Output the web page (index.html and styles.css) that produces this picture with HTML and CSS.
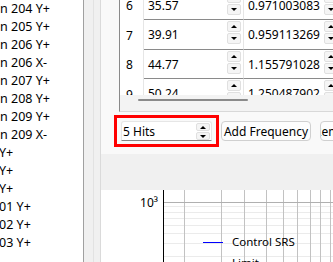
FILE: index.html
```html
<!DOCTYPE html>
<html lang="en">
<head>
  <meta charset="UTF-8" />
  <meta name="viewport" content="width=device-width, initial-scale=1.0" />
  <title>SRS Setup</title>
  <link rel="stylesheet" href="styles.css">
</head>
<body>
  <div class="app">
    <ul class="tree">
      <li>n 204 Y+</li>
      <li>n 205 Y+</li>
      <li>n 206 Y+</li>
      <li>n 206 X-</li>
      <li>n 207 Y+</li>
      <li>n 208 Y+</li>
      <li>n 209 Y+</li>
      <li>n 209 X-</li>
      <li class="cut">Y+</li>
      <li class="cut">Y+</li>
      <li class="cut">Y+</li>
      <li class="cut">01 Y+</li>
      <li class="cut">02 Y+</li>
      <li class="cut">03 Y+</li>
    </ul>

    <div class="gutter">
      <div class="gutter-track"></div>
      <div class="gutter-edge"></div>
    </div>

    <div class="main">
      <div class="table-frame">
        <div class="grid">
          <div class="grid-rows">
            <div class="row">
              <div class="rh">6</div>
              <div class="cell c-freq">
                <span class="val">35.57</span>
                <div class="spin">
                  <span class="sbtn"><svg width="6" height="3"><path d="M0 3L3 0L6 3Z"/></svg></span>
                  <span class="sbtn"><svg width="6" height="3"><path d="M0 0L3 3L6 0Z"/></svg></span>
                </div>
              </div>
              <div class="cell c-amp">
                <span class="val">0.971003083</span>
                <div class="spin">
                  <span class="sbtn"><svg width="6" height="3"><path d="M0 3L3 0L6 3Z"/></svg></span>
                  <span class="sbtn"><svg width="6" height="3"><path d="M0 0L3 3L6 0Z"/></svg></span>
                </div>
              </div>
            </div>
            <div class="row">
              <div class="rh">7</div>
              <div class="cell c-freq">
                <span class="val">39.91</span>
                <div class="spin">
                  <span class="sbtn"><svg width="6" height="3"><path d="M0 3L3 0L6 3Z"/></svg></span>
                  <span class="sbtn"><svg width="6" height="3"><path d="M0 0L3 3L6 0Z"/></svg></span>
                </div>
              </div>
              <div class="cell c-amp">
                <span class="val">0.959113269</span>
                <div class="spin">
                  <span class="sbtn"><svg width="6" height="3"><path d="M0 3L3 0L6 3Z"/></svg></span>
                  <span class="sbtn"><svg width="6" height="3"><path d="M0 0L3 3L6 0Z"/></svg></span>
                </div>
              </div>
            </div>
            <div class="row">
              <div class="rh">8</div>
              <div class="cell c-freq">
                <span class="val">44.77</span>
                <div class="spin">
                  <span class="sbtn"><svg width="6" height="3"><path d="M0 3L3 0L6 3Z"/></svg></span>
                  <span class="sbtn"><svg width="6" height="3"><path d="M0 0L3 3L6 0Z"/></svg></span>
                </div>
              </div>
              <div class="cell c-amp">
                <span class="val">1.155791028</span>
                <div class="spin">
                  <span class="sbtn"><svg width="6" height="3"><path d="M0 3L3 0L6 3Z"/></svg></span>
                  <span class="sbtn"><svg width="6" height="3"><path d="M0 0L3 3L6 0Z"/></svg></span>
                </div>
              </div>
            </div>
            <div class="row">
              <div class="rh">9</div>
              <div class="cell c-freq">
                <span class="val">50.24</span>
                <div class="spin">
                  <span class="sbtn"><svg width="6" height="3"><path d="M0 3L3 0L6 3Z"/></svg></span>
                  <span class="sbtn"><svg width="6" height="3"><path d="M0 0L3 3L6 0Z"/></svg></span>
                </div>
              </div>
              <div class="cell c-amp">
                <span class="val">1.250487902</span>
                <div class="spin">
                  <span class="sbtn"><svg width="6" height="3"><path d="M0 3L3 0L6 3Z"/></svg></span>
                  <span class="sbtn"><svg width="6" height="3"><path d="M0 0L3 3L6 0Z"/></svg></span>
                </div>
              </div>
            </div>
          </div>
        </div>
        <div class="hscroll"><div class="thumb"></div></div>
      </div>

      <div class="actions">
        <div class="highlight">
          <div class="spinbox">
            <span class="val">5 Hits</span>
            <div class="spin">
              <span class="sbtn"><svg width="6" height="3"><path d="M0 3L3 0L6 3Z"/></svg></span>
              <span class="sbtn"><svg width="6" height="3"><path d="M0 0L3 3L6 0Z"/></svg></span>
            </div>
          </div>
        </div>
        <button class="push">Add Frequency</button>
        <div class="push push-cut"><span>Remove Frequency</span></div>
      </div>

      <div class="spacer"></div>

      <div class="chart">
        <svg width="232" height="72">
          <g stroke="#ebebeb" stroke-width="1">
            <line x1="62" y1="16.5" x2="232" y2="16.5"/>
            <line x1="62" y1="22.5" x2="232" y2="22.5"/>
            <line x1="62" y1="28.5" x2="232" y2="28.5"/>
            <line x1="62" y1="35.5" x2="232" y2="35.5"/>
            <line x1="62" y1="43.5" x2="232" y2="43.5"/>
            <line x1="62" y1="53.5" x2="232" y2="53.5"/>
            <line x1="62" y1="66.5" x2="232" y2="66.5"/>
          </g>
          <g stroke="#c2c2c2" stroke-width="1">
            <line x1="83.5" y1="0" x2="83.5" y2="72"/>
            <line x1="120.5" y1="0" x2="120.5" y2="72"/>
            <line x1="143.5" y1="0" x2="143.5" y2="72"/>
            <line x1="165.5" y1="0" x2="165.5" y2="72"/>
            <line x1="182.5" y1="0" x2="182.5" y2="72"/>
            <line x1="196.5" y1="0" x2="196.5" y2="72"/>
            <line x1="209.5" y1="0" x2="209.5" y2="72"/>
            <line x1="219.5" y1="0" x2="219.5" y2="72"/>
            <line x1="229.5" y1="0" x2="229.5" y2="72"/>
          </g>
          <line x1="62" y1="12.5" x2="232" y2="12.5" stroke="#b0b0b0"/>
          <line x1="62.5" y1="0" x2="62.5" y2="72" stroke="#000"/>
          <text x="57" y="17" text-anchor="end" class="tick">10³</text>
          <line x1="102" y1="52.5" x2="122" y2="52.5" stroke="#0000ff"/>
          <text x="131" y="56" class="legend">Control SRS</text>
          <text x="131" y="77" class="legend">Limit</text>
        </svg>
      </div>
    </div>
  </div>
</body>
</html>
```

FILE: styles.css
```css
* {
  margin: 0;
  padding: 0;
  box-sizing: border-box;
}

body {
  font-family: "Noto Sans", sans-serif;
  font-size: 12px;
  color: #000;
  background-color: #f0f0f0;
  overflow: hidden;
}

.app {
  display: flex;
  width: 333px;
  height: 262px;
  overflow: hidden;
}

/* left list, scrolled sideways */
.tree {
  list-style: none;
  flex: none;
  width: 84px;
  background-color: #fff;
  border-right: 1px solid #a0a0a0;
  overflow: hidden;
}

.tree li {
  height: 18px;
  line-height: 18px;
  font-size: 12.5px;
  white-space: nowrap;
}

.tree li.cut {
  margin-left: -1px;
}

.gutter {
  display: flex;
  flex: none;
  background-color: #f0f0f0;
}

.gutter-track {
  width: 10px;
  border-right: 1px solid #e2e2e2;
}

.gutter-edge {
  width: 7px;
  border-right: 1px solid #dadada;
}

.main {
  flex: none;
  width: 232px;
  display: flex;
  flex-direction: column;
  background-color: #f9f9f9;
  overflow: hidden;
}

/* frequency table */
.table-frame {
  flex: none;
  margin-left: 18px;
  width: 214px;
  height: 112px;
  background-color: #fff;
  border-left: 1px solid #8a8a8a;
  border-bottom: 1px solid #d8d8d8;
  overflow: hidden;
}

.grid {
  height: 95px;
  overflow: hidden;
}

.grid-rows {
  margin-top: -9.5px;
}

.row {
  display: flex;
  height: 29.5px;
}

.rh {
  flex: none;
  width: 24px;
  padding: 1px 0 0 6px;
  display: flex;
  align-items: center;
  border-right: 1px solid #e6e6e6;
}

.cell {
  flex: none;
  display: flex;
  padding-right: 2px;
  border-right: 1px solid #e6e6e6;
  border-bottom: 1px solid #8a8a8a;
}

.c-freq {
  width: 100px;
}

.c-amp {
  width: 97px;
}

.val {
  flex: 1;
  align-self: center;
  padding: 1px 0 0 4px;
  white-space: nowrap;
}

.spin {
  flex: none;
  width: 14px;
  display: flex;
  flex-direction: column;
  gap: 1px;
  padding-top: 1px;
}

.sbtn {
  height: 11px;
  display: flex;
  align-items: center;
  justify-content: center;
  background-color: #f5f5f5;
  border: 1px solid #e0e0e0;
  border-radius: 2px;
}

.sbtn svg {
  fill: #000;
}

.hscroll {
  height: 16px;
  background-color: #f3f3f3;
  padding: 4px 0 0 18px;
}

.thumb {
  width: 110px;
  height: 2px;
  border-radius: 1px;
  background-color: #8a8a8a;
}

/* buttons under the table */
.actions {
  flex: none;
  height: 42px;
  display: flex;
  align-items: flex-start;
  gap: 2px;
  padding: 3px 0 0 13px;
}

.highlight {
  flex: none;
  width: 105px;
  height: 32px;
  padding: 3px 4px;
  border: 3px solid #ff0000;
}

.spinbox {
  display: flex;
  height: 20px;
  padding-right: 1px;
  background-color: #fff;
  border: 1px solid #e6e6e6;
  border-bottom-color: #868686;
  border-radius: 3px 3px 0 0;
}

.spinbox .val {
  padding-left: 1px;
}

.spinbox .spin {
  width: 14px;
  padding-top: 1px;
}

.spinbox .sbtn {
  height: 8px;
}

.push {
  flex: none;
  height: 20px;
  width: 90px;
  margin-top: 6px;
  font-family: inherit;
  font-size: 12px;
  color: #000;
  background-color: #fdfdfd;
  border: 1px solid #d0d0d0;
  border-radius: 4px;
  white-space: nowrap;
}

.push-cut {
  width: 60px;
  margin-left: 7px;
  display: flex;
  align-items: center;
  overflow: hidden;
}

.push-cut span {
  margin-left: -7px;
}

.spacer {
  flex: none;
  height: 36px;
  background-color: #f0f0f0;
}

.chart {
  flex: 1;
  background-color: #fff;
}

.chart svg {
  display: block;
}

.tick {
  font-family: "Noto Sans", sans-serif;
  font-size: 12px;
}

.legend {
  font-family: "Noto Sans", sans-serif;
  font-size: 11.5px;
}
```
